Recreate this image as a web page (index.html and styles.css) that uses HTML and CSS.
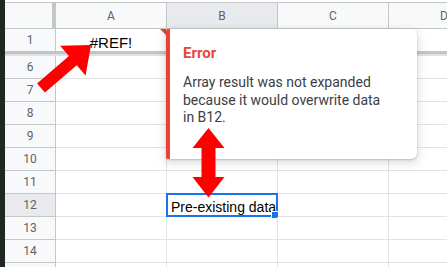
FILE: index.html
```html
<!DOCTYPE html>
<html lang="en">
<head>
    <meta charset="UTF-8">
    <meta name="viewport" content="width=device-width, initial-scale=1.0">
    <title>Sheet - Array error</title>
    <link rel="stylesheet" href="styles.css">
</head>
<body>
    <div class="app">
        <div class="rail"></div>

        <div class="sheet">
            <div class="top-gap"></div>

            <!-- column headers -->
            <div class="row head">
                <div class="corner"></div>
                <div class="col-h">A</div>
                <div class="col-h active">B</div>
                <div class="col-h">C</div>
                <div class="col-h">D</div>
            </div>

            <!-- frozen row -->
            <div class="row frozen">
                <div class="row-h">1</div>
                <div class="cell center">#REF!<span class="err-flag"></span></div>
                <div class="cell"></div>
                <div class="cell"></div>
                <div class="cell"></div>
            </div>
            <div class="freeze-bar"></div>

            <div class="row"><div class="row-h">6</div><div class="cell"></div><div class="cell"></div><div class="cell"></div><div class="cell"></div></div>
            <div class="row"><div class="row-h">7</div><div class="cell"></div><div class="cell"></div><div class="cell"></div><div class="cell"></div></div>
            <div class="row"><div class="row-h">8</div><div class="cell"></div><div class="cell"></div><div class="cell"></div><div class="cell"></div></div>
            <div class="row"><div class="row-h">9</div><div class="cell"></div><div class="cell"></div><div class="cell"></div><div class="cell"></div></div>
            <div class="row"><div class="row-h">10</div><div class="cell"></div><div class="cell"></div><div class="cell"></div><div class="cell"></div></div>
            <div class="row"><div class="row-h">11</div><div class="cell"></div><div class="cell"></div><div class="cell"></div><div class="cell"></div></div>
            <div class="row">
                <div class="row-h active">12</div>
                <div class="cell"></div>
                <div class="cell selected"><span class="cell-text">Pre-existing data</span><span class="sel-box"><span class="sel-handle"></span></span></div>
                <div class="cell"></div>
                <div class="cell"></div>
            </div>
            <div class="row"><div class="row-h">13</div><div class="cell"></div><div class="cell"></div><div class="cell"></div><div class="cell"></div></div>
            <div class="row"><div class="row-h">14</div><div class="cell"></div><div class="cell"></div><div class="cell"></div><div class="cell"></div></div>
            <div class="row"><div class="row-h"></div><div class="cell"></div><div class="cell"></div><div class="cell"></div><div class="cell"></div></div>
        </div>

        <!-- error tooltip -->
        <div class="popup">
            <div class="popup-title">Error</div>
            <div class="popup-body">Array result was not expanded because it would overwrite data in B12.</div>
        </div>

        <!-- annotation arrows -->
        <svg class="marks" width="447" height="267" viewBox="0 0 447 267">
            <polygon points="0,-6 42,-6 42,-19.5 66,0 42,19.5 42,6 0,6" transform="translate(41 88) rotate(-40.7)" fill="#ff0000"/>
            <polygon points="208.5,128 224.5,148 215.5,148 215.5,177 224.5,177 208.5,197.5 192.5,177 201.5,177 201.5,148 192.5,148" fill="#ff0000"/>
        </svg>
    </div>
</body>
</html>
```

FILE: styles.css
```css
* {
    box-sizing: border-box;
}
body {
    margin: 0;
    font-family: Roboto, "Liberation Sans", sans-serif;
    background-color: #fff;
}
.app {
    position: relative;
    display: flex;
    width: 447px;
    height: 267px;
    overflow: hidden;
}
.rail {
    width: 5px;
    flex-shrink: 0;
    background-color: #1f2721;
}
.sheet {
    flex: 1;
    overflow: hidden;
}
.top-gap {
    height: 2px;
}
.row {
    display: grid;
    grid-template-columns: 51px repeat(4, 111px);
    height: 23px;
}
.head {
    height: 27px;
    background-color: #f8f9fa;
    border-top: 1px solid #c4c7c5;
    border-bottom: 1px solid #c4c7c5;
}
.corner {
    border-right: 4px solid #c4c7c5;
}
.col-h {
    display: flex;
    align-items: center;
    justify-content: center;
    border-right: 1px solid #c4c7c5;
    font-size: 12px;
    color: #5f6368;
}
.col-h.active {
    background-color: #e8eaed;
}
.row-h {
    display: flex;
    align-items: center;
    justify-content: center;
    background-color: #f8f9fa;
    border-right: 1px solid #c4c7c5;
    border-bottom: 1px solid #c4c7c5;
    font-size: 12px;
    color: #5f6368;
}
.row-h.active {
    background-color: #e8eaed;
}
.cell {
    position: relative;
    display: flex;
    align-items: flex-end;
    padding: 0 3px;
    border-right: 1px solid #e2e3e3;
    border-bottom: 1px solid #e2e3e3;
    font-family: "Liberation Sans", Arial, sans-serif;
    font-size: 15px;
    line-height: 17px;
    color: #000;
    white-space: nowrap;
}
.cell.center {
    justify-content: center;
}
.frozen {
    height: 22px;
}
.frozen .cell,
.frozen .row-h {
    border-bottom: none;
}
.freeze-bar {
    height: 5px;
    background: linear-gradient(#c2c4c6 0, #c2c4c6 3px, #dcdee0 3px, #dcdee0 4px, #e2e3e3 4px);
}
.err-flag {
    position: absolute;
    top: 0;
    right: 0;
    width: 0;
    height: 0;
    border-top: 6px solid #ea4335;
    border-left: 6px solid transparent;
}
.cell-text {
    display: block;
    padding-left: 1px;
    font-size: 14px;
}
.sel-box {
    position: absolute;
    top: -1px;
    left: -1px;
    right: -1px;
    bottom: -1px;
    border: 2px solid #1a73e8;
}
.sel-handle {
    position: absolute;
    right: -3px;
    bottom: -4px;
    width: 8px;
    height: 8px;
    background-color: #1a73e8;
    border: 1px solid #fff;
}
.popup {
    position: absolute;
    left: 166px;
    top: 29px;
    width: 251px;
    height: 130px;
    padding: 14px 29px 0 13px;
    background-color: #fff;
    border-left: 4px solid #ea4335;
    border-radius: 2px 6px 6px 2px;
    box-shadow: 0 1px 2px rgba(60, 64, 67, 0.25), 0 3px 8px 2px rgba(60, 64, 67, 0.15);
}
.popup-title {
    font-size: 15px;
    line-height: 20px;
    font-weight: bold;
    color: #e8453c;
}
.popup-body {
    margin-top: 11px;
    font-size: 14px;
    line-height: 17.5px;
    color: #3c4043;
}
.marks {
    position: absolute;
    left: 0;
    top: 0;
    pointer-events: none;
}
```
